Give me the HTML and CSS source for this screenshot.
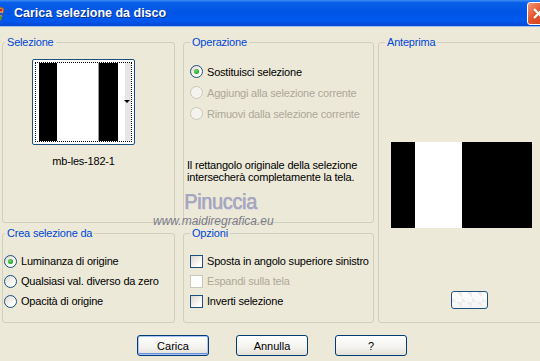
FILE: index.html
```html
<!DOCTYPE html>
<html lang="it">
<head>
    <meta charset="UTF-8">
    <meta name="viewport" content="width=device-width, initial-scale=1.0">
    <title>Carica selezione da disco</title>
    <link rel="stylesheet" href="styles.css">
</head>
<body>
    <div class="titlebar">
        <svg class="app-icon" width="16" height="16" viewBox="0 0 16 16">
            <path d="M2 3 Q8 0 14 4 L11 15 Q4 15 2 10 Z" fill="#e9c27a" stroke="#8a5a1c" stroke-width="1"/>
            <circle cx="11" cy="5" r="1.6" fill="#d02020"/>
            <circle cx="11" cy="9" r="1.6" fill="#2050d0"/>
            <circle cx="10" cy="12.5" r="1.5" fill="#20a030"/>
        </svg>
        <span class="title">Carica selezione da disco</span>
        <span class="close">
            <svg width="21" height="21" viewBox="0 0 21 21">
                <path d="M6 6 L15 15 M15 6 L6 15" stroke="#fff" stroke-width="2.2"/>
            </svg>
        </span>
    </div>

    <div class="client">
        <div class="groups">
            <fieldset class="group sel">
                <legend>Selezione</legend>
                <div class="thumb-wrap">
                    <div class="thumb">
                        <div class="thumb-focus">
                            <span class="st black w18"></span>
                            <span class="st white w41"></span>
                            <span class="st gray w1"></span>
                            <span class="st black w19"></span>
                            <span class="st white w7"></span>
                            <span class="st light grow"></span>
                        </div>
                        <span class="drop-arrow"></span>
                    </div>
                    <div class="thumb-name">mb-les-182-1</div>
                </div>
            </fieldset>

            <fieldset class="group op">
                <legend>Operazione</legend>
                <div class="options">
                    <label class="opt"><span class="radio on"></span>Sostituisci selezione</label>
                    <label class="opt disabled"><span class="radio"></span>Aggiungi alla selezione corrente</label>
                    <label class="opt disabled"><span class="radio"></span>Rimuovi dalla selezione corrente</label>
                </div>
                <p class="note">Il rettangolo originale della selezione<br>intersecherà completamente la tela.</p>
            </fieldset>

            <fieldset class="group prev">
                <legend>Anteprima</legend>
                <div class="preview">
                    <span class="st black w24"></span>
                    <span class="st white w47"></span>
                    <span class="st black grow"></span>
                </div>
                <button class="mini"></button>
            </fieldset>

            <fieldset class="group crea">
                <legend>Crea selezione da</legend>
                <div class="options rows20">
                    <label class="opt"><span class="radio on"></span>Luminanza di origine</label>
                    <label class="opt"><span class="radio"></span>Qualsiasi val. diverso da zero</label>
                    <label class="opt"><span class="radio"></span>Opacità di origine</label>
                </div>
            </fieldset>

            <fieldset class="group opz">
                <legend>Opzioni</legend>
                <div class="options rows20">
                    <label class="opt"><span class="check"></span>Sposta in angolo superiore sinistro</label>
                    <label class="opt disabled"><span class="check"></span>Espandi sulla tela</label>
                    <label class="opt"><span class="check"></span>Inverti selezione</label>
                </div>
            </fieldset>
        </div>

        <div class="buttons">
            <button class="btn default">Carica</button>
            <button class="btn">Annulla</button>
            <button class="btn">?</button>
        </div>

        <div class="watermark">
            <span class="wm-name">Pinuccia</span>
            <span class="wm-site">www.maidiregrafica.eu</span>
        </div>
    </div>
</body>
</html>
```

FILE: styles.css
```css
body {
    margin: 0;
    overflow: hidden;
    background-color: #ece9d8;
    font-family: "Liberation Sans", Arial, sans-serif;
    font-size: 11px;
    letter-spacing: -0.2px;
    color: #000;
}

/* barra del titolo */
.titlebar {
    display: flex;
    align-items: center;
    height: 27px;
    background: linear-gradient(#3d8cf5 0, #0a5fe8 10%, #0055e5 45%, #0058ee 80%, #0047cf 100%);
    border-bottom: 1px solid #ffffff80;
    box-sizing: border-box;
    letter-spacing: 0;
}
.app-icon {
    margin-left: -10px;
    flex-shrink: 0;
}
.title {
    margin-left: 8px;
    color: #fff;
    font-weight: bold;
    font-size: 12.5px;
    text-shadow: 1px 1px 0 #0a2f8c;
}
.close {
    margin-left: auto;
    margin-right: -10px;
    width: 21px;
    height: 21px;
    border: 1px solid #fff;
    border-radius: 3px;
    background: linear-gradient(135deg, #f29a7c, #e2562c 45%, #c8401b);
    display: flex;
}

/* area client */
.client {
    position: relative;
    padding: 8px 0 0 2px;
}
.groups {
    display: grid;
    grid-template-columns: 181px 195px 170px;
    grid-template-rows: 188px 97px;
    row-gap: 3px;
}
.group {
    margin: 0;
    padding: 0;
    min-width: 0;
    border: 1px solid #d0d0bf;
    border-radius: 3px;
    box-sizing: border-box;
}
.group legend {
    font-size: 11px;
    line-height: 14px;
    color: #0046d5;
    padding: 0 2px;
    margin-left: 6px;
}
.sel, .crea { width: 173px; }
.op, .opz { width: 191px; }
.sel legend, .crea legend { margin-left: 2px; }
.prev {
    grid-column: 3;
    grid-row: 1 / span 2;
    width: 170px;
}

/* selezione */
.thumb-wrap {
    margin: 10px 0 0 29px;
    width: 103px;
    display: flex;
    flex-direction: column;
    align-items: center;
}
.thumb {
    position: relative;
    width: 103px;
    height: 86px;
    box-sizing: border-box;
    border: 1px solid #1c5180;
    border-radius: 2px;
    background: #fff;
    padding: 2px;
}
.thumb-focus {
    display: flex;
    height: 100%;
    box-sizing: border-box;
    border: 1px dotted #000;
    padding-left: 3px;
}
.drop-arrow {
    position: absolute;
    right: 4px;
    top: 40px;
    border-left: 3px solid transparent;
    border-right: 3px solid transparent;
    border-top: 3px solid #000;
}
.thumb-name {
    margin-top: 10px;
    line-height: 13px;
}

.st { display: block; flex-shrink: 0; }
.black { background: #000; }
.white { background: #fff; }
.gray { background: #9a9a9a; }
.light { background: #e6e6e6; }
.grow { flex: 1; }
.w1 { width: 1px; }
.w7 { width: 7px; }
.w18 { width: 18px; }
.w19 { width: 19px; }
.w24 { width: 24px; }
.w41 { width: 41px; }
.w47 { width: 47px; }

/* opzioni */
.options {
    padding: 12px 0 0 6px;
}
.opt {
    display: flex;
    align-items: center;
    gap: 4px;
    height: 21px;
    white-space: nowrap;
}
.rows20 {
    padding-top: 11px;
}
.rows20 .opt {
    height: 20px;
}
.crea .options {
    padding-left: 1px;
}
.opt.disabled {
    color: #aca899;
}
.radio {
    position: relative;
    width: 13px;
    height: 13px;
    box-sizing: border-box;
    border: 1px solid #1c5180;
    border-radius: 50%;
    background: linear-gradient(135deg, #dcd9cc, #ffffff 75%);
    flex-shrink: 0;
}
.radio.on::after {
    content: "";
    position: absolute;
    left: 3px;
    top: 3px;
    width: 5px;
    height: 5px;
    border-radius: 50%;
    background: radial-gradient(circle at 40% 40%, #6fdc6f, #21a121 70%);
}
.disabled .radio {
    border-color: #cac8bb;
    background: #f4f3ee;
}
.check {
    width: 13px;
    height: 13px;
    box-sizing: border-box;
    border: 1px solid #1c5180;
    background: linear-gradient(135deg, #dcd9cc, #ffffff 80%);
    flex-shrink: 0;
}
.disabled .check {
    border-color: #cac8bb;
    background: #fff;
}
.note {
    margin: 35px 0 0 3px;
    line-height: 12px;
}

/* anteprima */
.preview {
    display: flex;
    width: 141px;
    height: 86px;
    margin: 93px 0 0 12px;
}
.mini {
    display: block;
    margin: 63px 0 0 72px;
    width: 37px;
    height: 18px;
    border: 1px solid #1c5180;
    border-radius: 3px;
    background:
        linear-gradient(45deg, #ececec 25%, transparent 25%, transparent 75%, #ececec 75%) 0 0 / 10px 10px,
        linear-gradient(#ffffff, #f4f4f4);
}

/* pulsanti */
.buttons {
    display: flex;
    justify-content: center;
    gap: 27px;
    margin-top: 12px;
    padding-left: 2px;
}
.btn {
    width: 72px;
    height: 21px;
    box-sizing: border-box;
    border: 1px solid #003c74;
    border-radius: 3px;
    background: linear-gradient(#ffffff, #f3f2ee 60%, #e3e0d6);
    font-family: "Liberation Sans", Arial, sans-serif;
    font-size: 11px;
    color: #000;
    padding: 0;
}
.btn.default {
    box-shadow: inset 0 0 0 1px #a9c6f5, inset 0 -1px 0 1px #6a8fe0;
}

/* filigrana */
.watermark {
    position: absolute;
    left: 0;
    top: 0;
    pointer-events: none;
    letter-spacing: 0;
}
.wm-name {
    position: absolute;
    left: 184px;
    top: 164px;
    font-size: 22px;
    line-height: 22px;
    letter-spacing: -0.3px;
    color: #a6a6be;
    text-shadow: 0.6px 0 0 #a6a6be, 1px 1px 0 #d6d6e2;
    transform: scaleX(0.9);
    transform-origin: left top;
    white-space: nowrap;
}
.wm-site {
    position: absolute;
    left: 153px;
    top: 189px;
    font-size: 12px;
    line-height: 10px;
    font-style: italic;
    color: #7c7c8c;
    white-space: nowrap;
}
```
